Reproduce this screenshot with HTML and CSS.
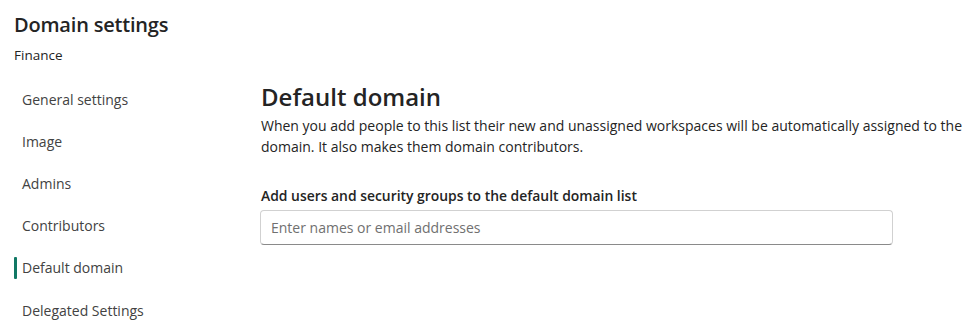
FILE: index.html
```html
<!DOCTYPE html>
<html>
<head>
<meta charset="utf-8">
<link rel="stylesheet" href="styles.css">
</head>
<body>
<div class="page">
  <aside class="side">
    <h1 class="title">Domain settings</h1>
    <div class="sub">Finance</div>
    <nav class="nav">
      <div class="item">General settings</div>
      <div class="item">Image</div>
      <div class="item">Admins</div>
      <div class="item">Contributors</div>
      <div class="item active">Default domain</div>
      <div class="item">Delegated Settings</div>
    </nav>
  </aside>
  <main class="main">
    <h2 class="heading">Default domain</h2>
    <p class="desc">When you add people to this list their new and unassigned workspaces will be automatically assigned to the domain. It also makes them domain contributors.</p>
    <label class="label">Add users and security groups to the default domain list</label>
    <div class="input">Enter names or email addresses</div>
  </main>
</div>
</body>
</html>
```
FILE: styles.css
```css
* { box-sizing: border-box; }
html, body { margin: 0; padding: 0; background: #fff; }
body {
  font-family: "Open Sans", "Noto Sans", sans-serif;
  color: #242424;
  width: 975px;
  height: 336px;
  overflow: hidden;
}
.page { display: flex; }
.side { width: 246px; padding: 12px 0 0 14px; flex-shrink: 0; }
.title { margin: 0; font-size: 20px; font-weight: 600; line-height: 26px; color: #242424; letter-spacing: -0.2px; }
.sub { margin-top: 7px; font-size: 13.5px; line-height: 20px; color: #242424; }
.nav { margin-top: 13px; display: flex; flex-direction: column; }
.item {
  height: 42.2px; display: flex; align-items: center;
  padding-left: 8px; font-size: 14px; color: #424242; position: relative;
}
.item.active::before {
  content: ""; position: absolute; left: 0; top: 10px; width: 3px; height: 22px;
  background: #117865; border-radius: 1px;
}
.main { padding-top: 81px; flex: 1; padding-left: 15px; }
.heading { margin: 0; font-size: 24px; font-weight: 600; line-height: 32px; color: #242424; }
.desc { margin: 2px 0 0; font-size: 14px; line-height: 21px; color: #242424; width: 712px; }
.label { display: block; margin-top: 29px; font-size: 13.9px; font-weight: 600; line-height: 20px; color: #242424; }
.input {
  margin-top: 4px; width: 633px; height: 35px; margin-left: -1px;
  border: 1px solid #d1d1d1; border-bottom-color: #8a8a8a; border-radius: 4px;
  padding-left: 10px; display: flex; align-items: center;
  font-size: 14px; color: #707070;
}
```
